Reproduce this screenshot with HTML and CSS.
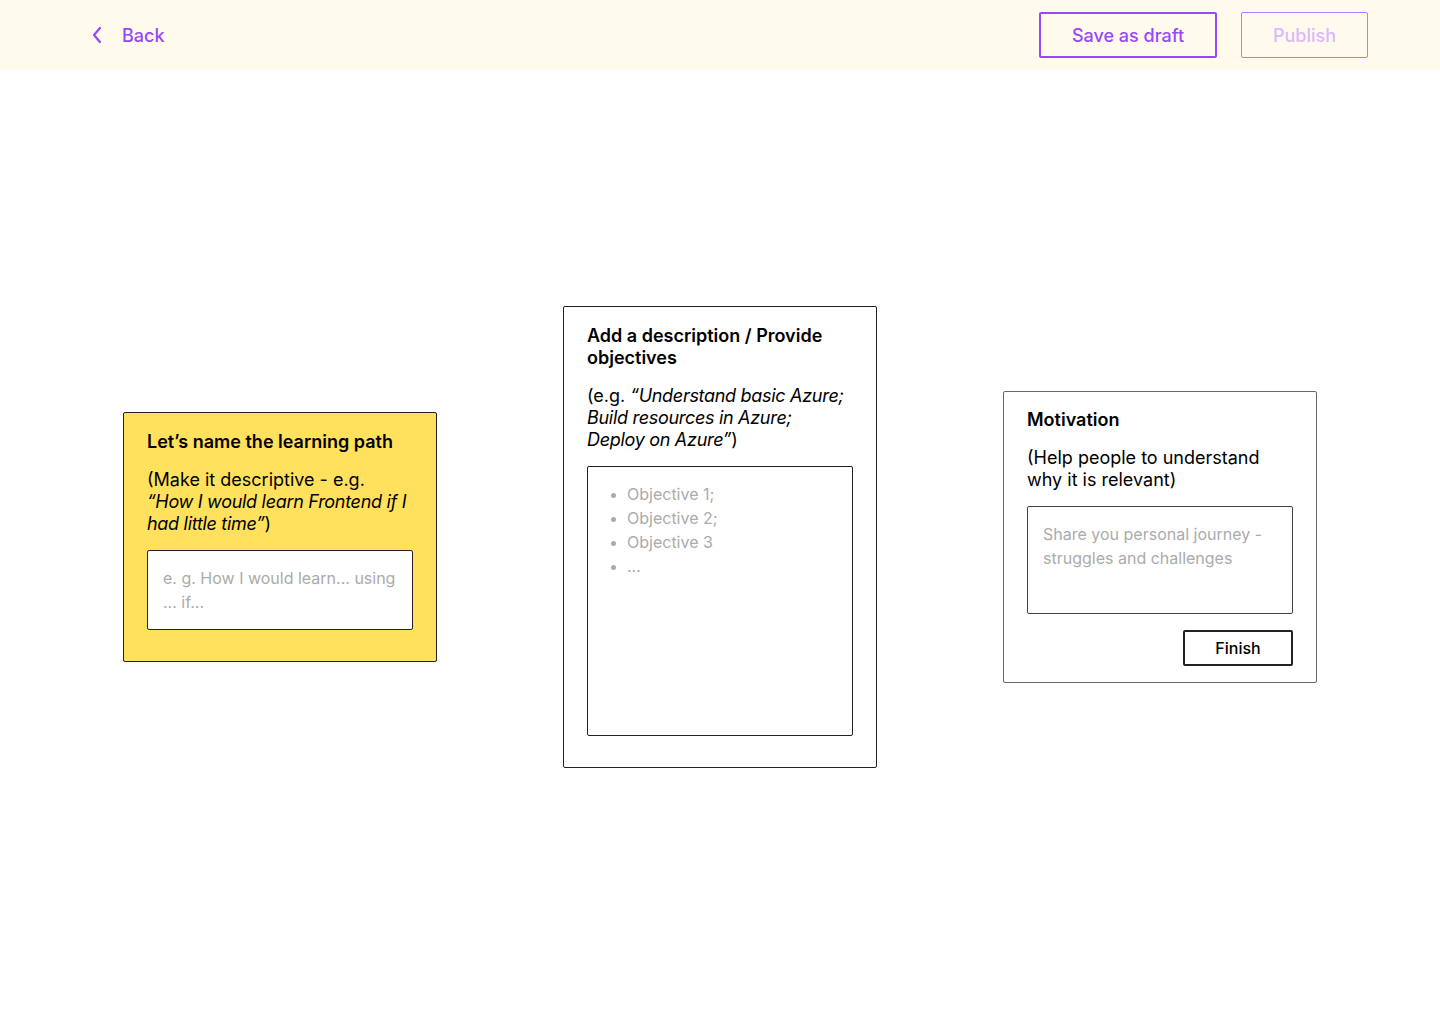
FILE: index.html
```html
<!DOCTYPE html>
<html lang="en">
<head>
<meta charset="utf-8">
<title>Create learning path</title>
<link rel="stylesheet" href="styles.css">
</head>
<body>
<header class="topbar">
  <a class="back" href="#">
    <svg class="back-icon" width="12" height="18" viewBox="0 0 12 18" fill="none"><path d="M9 2L3 9L9 16" stroke="#9747FF" stroke-width="2.2" stroke-linecap="round" stroke-linejoin="round"/></svg>
    <span>Back</span>
  </a>
  <div class="actions">
    <button class="btn btn-draft">Save as draft</button>
    <button class="btn btn-publish">Publish</button>
  </div>
</header>
<main class="canvas">
  <section class="card card-yellow">
    <h2 class="card-title">Let’s name the learning path</h2>
    <p class="card-text">(Make it descriptive - e.g. <em>“How I would learn Frontend if I had little time”</em>)</p>
    <div class="field field-name">e. g. How I would learn... using ... if...</div>
  </section>
  <section class="card card-desc">
    <h2 class="card-title">Add a description / Provide objectives</h2>
    <p class="card-text">(e.g. <em>“Understand basic Azure; Build resources in Azure; Deploy on Azure”</em>)</p>
    <div class="field field-list">
      <ul>
        <li>Objective 1;</li>
        <li>Objective 2;</li>
        <li>Objective 3</li>
        <li>...</li>
      </ul>
    </div>
  </section>
  <section class="card card-motivation">
    <h2 class="card-title">Motivation</h2>
    <p class="card-text">(Help people to understand why it is relevant)</p>
    <div class="field field-motivation">Share you personal journey - struggles and challenges</div>
    <div class="finish-row"><button class="finish">Finish</button></div>
  </section>
</main>
</body>
</html>
```
FILE: styles.css
```css
* { box-sizing: border-box; }
html, body { margin: 0; padding: 0; }
body {
  font-family: Inter, "Noto Sans", sans-serif;
  background: #ffffff;
  color: #000;
  width: 1440px;
  height: 1024px;
  overflow: hidden;
}
.topbar {
  height: 70px;
  background: #FFFAEB;
  display: flex;
  align-items: center;
  justify-content: space-between;
  padding: 0 72px 0 91px;
}
.back {
  display: flex;
  align-items: center;
  gap: 19px;
  text-decoration: none;
  color: #9747FF;
  font-size: 18px;
  font-weight: 500;
}
.back-icon { display: block; }
.actions { display: flex; gap: 24px; align-items: center; }
.btn {
  font-family: inherit;
  font-size: 18px;
  font-weight: 500;
  background: transparent;
  height: 46px;
  border-radius: 2px;
  cursor: pointer;
}
.btn-draft {
  width: 178px;
  border: 2px solid #9747FF;
  color: #9747FF;
}
.btn-publish {
  width: 127px;
  border: 1.5px solid #B07EFF;
  color: #DBB8FF;
}
.canvas {
  height: 934px;
  display: flex;
  align-items: center;
  justify-content: center;
  gap: 126px;
}
.card {
  width: 314px;
  border: 1px solid #222;
  border-radius: 2px;
  padding: 18px 23px 31px;
  display: flex;
  flex-direction: column;
  gap: 16px;
  background: #fff;
}
.card-yellow { background: #FFE15D; }
.card-motivation { border-color: #666; padding-top: 17px; padding-bottom: 16px; }
.card-title {
  margin: 0;
  font-size: 18px;
  line-height: 22px;
  font-weight: 600;
}
.card-text {
  margin: 0;
  font-size: 18px;
  line-height: 22px;
  font-weight: 400;
}
.card-text em { font-style: italic; letter-spacing: -0.3px; }
.field {
  background: #fff;
  border: 1px solid #222;
  border-radius: 2px;
  padding: 15px;
  margin-top: -1px;
  font-size: 16px;
  line-height: 24px;
  color: #ABABAB;
}
.field-name { height: 80px; }
.field-list { height: 270px; }
.field-motivation { height: 108px; border-color: #444; }
.field-list ul {
  margin: 0;
  padding-left: 24px;
}
.field-list li::marker { color: #ABABAB; font-size: 14px; }
.finish-row { display: flex; justify-content: flex-end; }
.finish {
  width: 110px;
  height: 36px;
  border: 2px solid #222;
  border-radius: 2px;
  background: #fff;
  font-family: inherit;
  font-size: 16px;
  font-weight: 500;
  color: #000;
}
```
